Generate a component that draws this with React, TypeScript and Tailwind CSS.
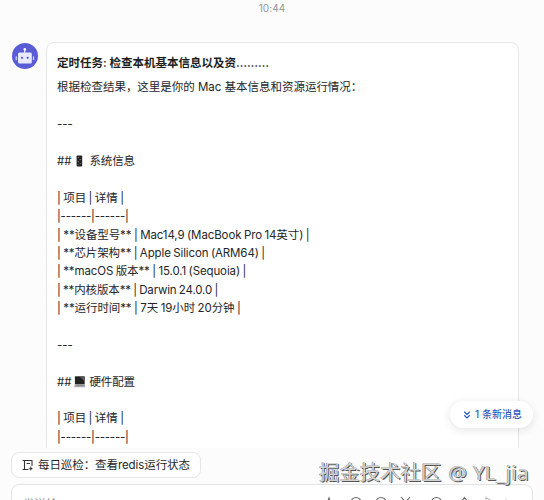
import type React from "react"
import { ChevronsDown } from "lucide-react"

const lines = [
  { text: "根据检查结果，这里是你的 Mac 基本信息和资源运行情况：", tracking: "tracking-[-0.02px]" },
  { text: "" },
  { text: "---" },
  { text: "" },
  { text: "系统信息", icon: "phone", tracking: "tracking-[-0.15px]" },
  { text: "" },
  { text: "| 项目 | 详情 |", tracking: "tracking-[-0.1px] [word-spacing:-0.6px]" },
  { text: "|------|------|", tracking: "tracking-[-0.22px]" },
  { text: "| **设备型号** | Mac14,9 (MacBook Pro 14英寸) |", tracking: "tracking-[-0.11px] [word-spacing:-0.6px]" },
  { text: "| **芯片架构** | Apple Silicon (ARM64) |", tracking: "tracking-[-0.11px] [word-spacing:-0.7px]" },
  { text: "| **macOS 版本** | 15.0.1 (Sequoia) |", tracking: "tracking-[-0.12px] [word-spacing:-0.6px]" },
  { text: "| **内核版本** | Darwin 24.0.0 |", tracking: "tracking-[-0.14px] [word-spacing:-0.8px]" },
  { text: "| **运行时间** | 7天 19小时 20分钟 |", tracking: "tracking-[-0.1px] [word-spacing:-0.6px]" },
  { text: "" },
  { text: "---" },
  { text: "" },
  { text: "硬件配置", icon: "laptop", tracking: "tracking-[-0.15px]" },
  { text: "" },
  { text: "| 项目 | 详情 |", tracking: "tracking-[-0.1px] [word-spacing:-0.6px]" },
  { text: "|------|------|", tracking: "tracking-[-0.22px]" },
]

const BotAvatar: React.FC = () => (
  <svg className="mt-[43px] h-[26px] w-[26px] shrink-0" viewBox="0 0 26 26">
    <circle cx="13" cy="13" r="13" fill="#5a5cd6" />
    <circle cx="12.8" cy="6.4" r="1.3" fill="#fff" />
    <path d="M12.8 7v4" stroke="#fff" strokeWidth="1.1" />
    <rect x="3.6" y="13.2" width="1.3" height="4" rx=".6" fill="#cfd6ff" />
    <rect x="20.9" y="13.2" width="1.3" height="4" rx=".6" fill="#cfd6ff" />
    <rect x="6" y="9.6" width="13.8" height="11" rx="1.5" fill="#e6e9ff" />
    <circle cx="10" cy="14.8" r="1.1" fill="#5356c8" />
    <circle cx="15.7" cy="14.8" r="1.1" fill="#5356c8" />
  </svg>
)

const PhoneIcon: React.FC = () => (
  <svg className="h-3 w-3" viewBox="0 0 12 12">
    <rect x="2.6" y="0.5" width="5.6" height="11" rx="0.8" fill="#242424" />
    <path d="M3.6 2.5h1.5M5.6 4.5h1.6M3.6 6.5h1.5M5.6 8.5h1.6M3.6 9.5h1" stroke="#777" strokeWidth="0.8" />
  </svg>
)

const LaptopIcon: React.FC = () => (
  <svg className="h-3 w-3" viewBox="0 0 12 12">
    <path d="M0.9 0.3h9.8v7.7H0.9z" fill="#222" />
    <path d="M6 1h4v4z" fill="#555" />
    <path d="M0.9 8h9.8l.8 3.3H.1z" fill="#aaa" />
    <path d="M2 9.2h8" stroke="#666" strokeWidth="0.7" />
  </svg>
)

const TaskIcon: React.FC = () => (
  <svg
    className="h-3 w-3 shrink-0"
    viewBox="0 0 12 12"
    fill="none"
    stroke="#333"
    strokeWidth="1.1"
    strokeLinecap="round"
    strokeLinejoin="round"
  >
    <path d="M6 10.5H2.5V1.500h7.500v5M1 1.500h1.500M1 10.500h1.500M5 4.500h2.500" />
    <path d="M8.800 7.500l.6 1.500 1.500.6-1.500.6-.6 1.500-.6-1.500-1.500-.6 1.500-.6z" fill="#333" strokeWidth="0.2" />
  </svg>
)

const Toolbar: React.FC = () => (
  <svg
    className="ml-auto mt-[11px] h-4 w-[201px] shrink-0"
    viewBox="0 0 201 16"
    fill="none"
    stroke="#666"
    strokeWidth="1.1"
  >
    <path d="M5.5 12l3.500-10 3.500 10M6.500 9h5" />
    <circle cx="36" cy="6.500" r="5" />
    <circle cx="61" cy="6.500" r="5" />
    <path d="M81 1l9 10M90 1l-9 10" />
    <circle cx="116.500" cy="6.500" r="5" />
    <path d="M144.500 1.500l3 4h-6z" />
    <path d="M166 1.500l8 5-8 5z" stroke="#bbb" />
    <path d="M186 2v10" stroke="#ddd" />
  </svg>
)

const App: React.FC = () => {
  return (
    <div className="relative flex h-[500px] w-[544px] flex-col overflow-hidden bg-[#fcfcfd] font-['Inter','Noto_Sans_CJK_SC',sans-serif] text-[#242629]">
      {/* Messages */}
      <div className="h-[448px] shrink-0 overflow-hidden">
        <div className="pt-[2px] text-center text-[10px] leading-3 tracking-[0.1px] text-[#92959a]">10:44</div>
        <div className="-mt-[14px] flex gap-2 pl-3">
          <BotAvatar />
          <div className="mt-[42px] h-[440px] w-[473px] rounded-lg border border-[#e5e6e8] bg-white px-2.5 pt-[11px]">
            <h3 className="whitespace-pre text-[11.5px] font-semibold leading-[18.4px] text-[#1c1e21]">
              定时任务: 检查本机基本信息以及资………
            </h3>
            <div className="mt-[6px] text-[11.5px] leading-[18.4px]">
              {lines.map((line, i) => (
                <div key={i} className={`flex h-[18.4px] items-center whitespace-pre ${line.tracking ?? ""}`}>
                  {line.icon ? (
                    <>
                      <span>## </span>
                      {line.icon === "phone" ? <PhoneIcon /> : <LaptopIcon />}
                      <span> {line.text}</span>
                    </>
                  ) : (
                    <span>{line.text}</span>
                  )}
                </div>
              ))}
            </div>
          </div>
        </div>
      </div>

      {/* Quick task and input */}
      <div className="flex flex-col px-[11px] pt-1">
        <div className="flex h-[26px] w-[190px] items-center gap-1 rounded-lg border border-[#e5e6e8] bg-white pl-[10px] text-[11.5px]">
          <TaskIcon />
          <span className="whitespace-nowrap pt-px tracking-[-0.08px]">每日巡检：查看redis运行状态</span>
        </div>
        <div className="mt-1.5 flex h-12 items-start rounded-lg border border-[#e2e3e5] bg-white px-[11px]">
          <span className="mt-[10px] text-[11.5px] leading-[18px] text-[#8f9399]">发送给</span>
          <Toolbar />
        </div>
      </div>

      {/* New message pill */}
      <div className="absolute left-[450px] top-[401px] flex h-[27px] w-[83px] items-center justify-center gap-[2px] rounded-full bg-white text-[10px] font-medium text-[#2c5cbd] shadow-[0_2px_8px_rgba(31,35,41,0.12)]">
        <ChevronsDown size={12} strokeWidth={2.2} />
        <span className="whitespace-nowrap">1 条新消息</span>
      </div>

      {/* Watermark */}
      <div className="absolute left-[319px] top-[458px] whitespace-pre font-['Noto_Sans','Noto_Sans_CJK_SC',sans-serif] text-[20.4px] leading-7 text-[#d2d2d2] [text-shadow:1px_1px_0.5px_#555,-0.5px_-0.5px_0_#888]">
        掘金技术社区<span className="ml-[1.5px] tracking-[0.45px]"> @ YL_jia</span>
      </div>
    </div>
  )
}

export default App
